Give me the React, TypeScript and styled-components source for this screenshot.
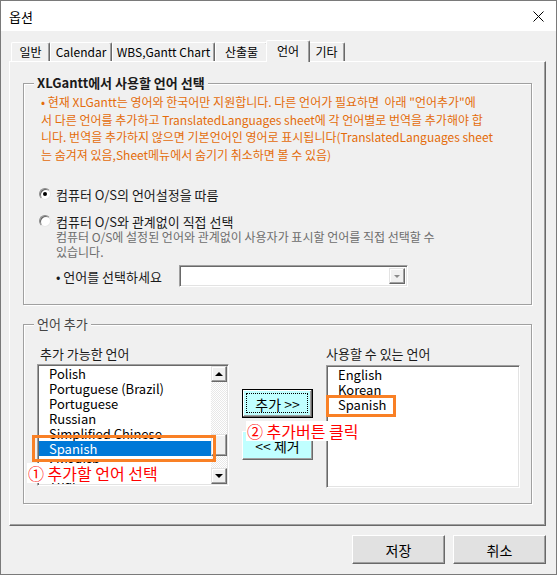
import React from 'react';
import styled, { createGlobalStyle, css } from 'styled-components';

const FONT = `"Noto Sans CJK KR", "Noto Sans", sans-serif`;

const Global = createGlobalStyle`
  html, body { margin: 0; padding: 0; background: #fff; }
  body { font-family: ${FONT}; }
  * { box-sizing: border-box; }
`;

const Window = styled.div`
  width: 557px;
  height: 575px;
  border: 1px solid #7a7a7a;
  background: #f0f0f0;
  display: flex;
  flex-direction: column;
  font-family: ${FONT};
  color: #000;
  overflow: hidden;
`;

const TitleBar = styled.div`
  height: 30px;
  flex: none;
  background: #fff;
  display: flex;
  align-items: center;
  justify-content: space-between;
  padding-left: 8px;
  font-size: 13px;
`;

const CloseBtn = styled.div`
  width: 36px;
  height: 30px;
  display: flex;
  align-items: center;
  justify-content: center;
`;

const TabStrip = styled.div`
  margin: 9px 0 0 10px;
  height: 21px;
  flex: none;
  display: flex;
  align-items: flex-end;
`;

const Tab = styled.div<{ $w: number; $active?: boolean }>`
  width: ${(p) => p.$w}px;
  height: 19px;
  font-size: 12px;
  line-height: 17px;
  text-align: center;
  white-space: nowrap;
  background: #f0f0f0;
  border-top: 1px solid #fff;
  border-left: 1px solid #fff;
  border-right: 1px solid #696969;
  box-shadow: inset -1px 0 0 #a0a0a0;
  border-top-left-radius: 2px;
  border-top-right-radius: 2px;
  ${(p) =>
    p.$active &&
    css`
      position: relative;
      z-index: 2;
      height: 22px;
      margin: 0 -2px -1px -2px;
      width: ${p.$w + 4}px;
      line-height: 19px;
    `}
`;

const Panel = styled.div`
  margin: 0 10px 0 8px;
  height: 465px;
  flex: none;
  border: 1px solid;
  border-color: #fff #696969 #696969 #fff;
  box-shadow: inset -1px -1px 0 #a0a0a0;
  padding: 21px 13px 0 13px;
  display: flex;
  flex-direction: column;
`;

const Group = styled.div<{ $h: number; $mt?: number }>`
  height: ${(p) => p.$h}px;
  margin-top: ${(p) => p.$mt ?? 0}px;
  border: 1px solid #a0a0a0;
  box-shadow: inset 1px 1px 0 #fff, 1px 1px 0 #fff;
  display: flex;
  flex-direction: column;
  flex: none;
`;

const Legend = styled.div<{ $bold?: boolean }>`
  align-self: flex-start;
  margin: -9px 0 0 10px;
  padding: 0 3px;
  background: #f0f0f0;
  height: 16px;
  line-height: 16px;
  font-size: 13px;
  font-weight: ${(p) => (p.$bold ? 700 : 400)};
  color: ${(p) => (p.$bold ? '#1a1a1a' : '#444')};
`;

const Notice = styled.div`
  margin: 2px 0 0 17px;
  color: #e46c0a;
  font-size: 12px;
  line-height: 17.5px;
  white-space: nowrap;
`;

const RadioRow = styled.div<{ $mt: number }>`
  margin-top: ${(p) => p.$mt}px;
  padding-left: 15px;
  height: 16px;
  display: flex;
  align-items: center;
  gap: 5px;
  font-size: 13px;
  color: #1a1a1a;
  white-space: nowrap;
`;

const RadioCircle = styled.span<{ $checked?: boolean }>`
  width: 12px;
  height: 12px;
  border-radius: 50%;
  background: #fff;
  border: 1px solid;
  border-color: #8a8a8a #e8e8e8 #e8e8e8 #8a8a8a;
  box-shadow: inset 1px 1px 0 #666;
  display: flex;
  align-items: center;
  justify-content: center;
  flex: none;
  &::after {
    content: '';
    width: 4px;
    height: 4px;
    border-radius: 50%;
    background: ${(p) => (p.$checked ? '#000' : 'transparent')};
  }
`;

const Description = styled.div`
  padding-left: 32px;
  color: #6d6d6d;
  font-size: 12px;
  line-height: 15px;
  white-space: nowrap;
`;

const SelectRow = styled.div`
  margin-top: 6px;
  padding-left: 32px;
  height: 22px;
  display: flex;
  align-items: center;
  font-size: 13px;
  color: #1a1a1a;
`;

const SelectLabel = styled.span`
  width: 123px;
  white-space: nowrap;
`;

const Combo = styled.div`
  width: 229px;
  height: 22px;
  background: #fff;
  border: 1px solid;
  border-color: #a0a0a0 #fff #fff #a0a0a0;
  box-shadow: inset 1px 1px 0 #696969, inset -1px -1px 0 #e3e3e3;
  padding: 2px;
  display: flex;
  justify-content: flex-end;
`;

const DropBtn = styled.div`
  width: 16px;
  height: 16px;
  background: #f0f0f0;
  border: 1px solid;
  border-color: #e3e3e3 #696969 #696969 #e3e3e3;
  box-shadow: inset -1px -1px 0 #a0a0a0, inset 1px 1px 0 #fff;
  display: flex;
  align-items: center;
  justify-content: center;
  &::after {
    content: '';
    border-left: 3px solid transparent;
    border-right: 3px solid transparent;
    border-top: 3px solid #8a8a8a;
  }
`;

const AddRow = styled.div`
  margin-top: 13px;
  padding-left: 13px;
  display: flex;
  align-items: flex-start;
`;

const Column = styled.div<{ $w: number }>`
  width: ${(p) => p.$w}px;
  display: flex;
  flex-direction: column;
  flex: none;
`;

const ColLabel = styled.div<{ $pl: number }>`
  height: 18px;
  line-height: 18px;
  font-size: 13px;
  color: #1a1a1a;
  padding-left: ${(p) => p.$pl}px;
  white-space: nowrap;
`;

const ListBox = styled.div<{ $h: number; $mt: number }>`
  position: relative;
  height: ${(p) => p.$h}px;
  margin-top: ${(p) => p.$mt}px;
  background: #fff;
  border: 1px solid;
  border-color: #a0a0a0 #fff #fff #a0a0a0;
  box-shadow: inset 1px 1px 0 #696969, inset -1px -1px 0 #e3e3e3;
  padding: 1px;
  display: flex;
`;

const Items = styled.div`
  flex: 1;
  overflow: hidden;
  display: flex;
  flex-direction: column;
`;

const Item = styled.div<{ $selected?: boolean }>`
  height: 15px;
  line-height: 15px;
  flex: none;
  padding-left: 10px;
  font-size: 13px;
  white-space: nowrap;
  color: ${(p) => (p.$selected ? '#fff' : '#000')};
  background: ${(p) => (p.$selected ? '#0078d7' : 'transparent')};
`;

const ScrollBar = styled.div`
  width: 16px;
  display: flex;
  flex-direction: column;
  flex: none;
`;

const scrollPart = css`
  background: #f0f0f0;
  border: 1px solid;
  border-color: #e3e3e3 #696969 #696969 #e3e3e3;
  box-shadow: inset -1px -1px 0 #a0a0a0, inset 1px 1px 0 #fff;
`;

const ScrollBtn = styled.div<{ $down?: boolean }>`
  ${scrollPart};
  height: 16px;
  flex: none;
  display: flex;
  align-items: center;
  justify-content: center;
  &::after {
    content: '';
    border-left: 4px solid transparent;
    border-right: 4px solid transparent;
    ${(p) =>
      p.$down
        ? css`border-top: 4px solid #000;`
        : css`border-bottom: 4px solid #000;`}
  }
`;

const Track = styled.div`
  flex: 1;
  background: repeating-conic-gradient(#e8e8e8 0 25%, #fff 0 50%) 0 0 / 2px 2px;
  display: flex;
  flex-direction: column;
`;

const Thumb = styled.div<{ $top: number; $h: number }>`
  ${scrollPart};
  margin-top: ${(p) => p.$top}px;
  height: ${(p) => p.$h}px;
`;

const Middle = styled.div`
  position: relative;
  width: 71px;
  margin: 0 13px;
  padding-top: 44px;
  display: flex;
  flex-direction: column;
  gap: 13px;
  flex: none;
`;

const CyanButton = styled.div<{ $default?: boolean }>`
  position: relative;
  width: 71px;
  height: 29px;
  background: #c0ffff;
  font-size: 14px;
  display: flex;
  align-items: center;
  justify-content: center;
  white-space: nowrap;
  ${(p) =>
    p.$default
      ? css`
          border: 1px solid #000;
          box-shadow: inset -1px -1px 0 #696969, inset 1px 1px 0 #fff, inset -2px -2px 0 #a0a0a0;
          &::after {
            content: '';
            position: absolute;
            inset: 3px 4px 4px 3px;
            border: 1px dotted #000;
          }
        `
      : css`
          border: 1px solid;
          border-color: #fff #696969 #696969 #fff;
          box-shadow: inset -1px -1px 0 #a0a0a0;
        `}
`;

const OrangeBox = styled.div<{ $l: number; $t: number; $w: number; $h: number }>`
  position: absolute;
  left: ${(p) => p.$l}px;
  top: ${(p) => p.$t}px;
  width: ${(p) => p.$w}px;
  height: ${(p) => p.$h}px;
  border: 3px solid #f98025;
  z-index: 3;
`;

const Annotation = styled.div<{ $l: number; $t: number }>`
  position: absolute;
  left: ${(p) => p.$l}px;
  top: ${(p) => p.$t}px;
  z-index: 4;
  background: #fff;
  color: #ff0000;
  font-size: 16px;
  line-height: 20px;
  height: 20px;
  padding: 0 1px;
  white-space: nowrap;
`;

const Footer = styled.div`
  margin-top: 9px;
  padding-right: 10px;
  display: flex;
  justify-content: flex-end;
  gap: 8px;
  flex: none;
`;

const FooterButton = styled.div`
  width: 93px;
  height: 29px;
  background: #e1e1e1;
  border: 1px solid;
  border-color: #fff #696969 #696969 #fff;
  box-shadow: inset -1px -1px 0 #a0a0a0;
  font-size: 14px;
  display: flex;
  align-items: center;
  justify-content: center;
`;

const tabs: { label: string; w: number; active?: boolean }[] = [
  { label: '일반', w: 39 },
  { label: 'Calendar', w: 62 },
  { label: 'WBS,Gantt Chart', w: 103 },
  { label: '산출물', w: 53 },
  { label: '언어', w: 40, active: true },
  { label: '기타', w: 37 },
];

const available = [
  'Polish',
  'Portuguese (Brazil)',
  'Portuguese',
  'Russian',
  'Simplified Chinese',
  'Spanish',
  'Swedish',
  'Thai',
];

const usable = ['English', 'Korean', 'Spanish'];

export default function App() {
  return (
    <>
      <Global />
      <Window>
        <TitleBar>
          <span>옵션</span>
          <CloseBtn>
            <svg width="11" height="11" viewBox="0 0 11 11">
              <path d="M0.5 0.5 L10.5 10.5 M10.5 0.5 L0.5 10.5" stroke="#000" strokeWidth="1" />
            </svg>
          </CloseBtn>
        </TitleBar>
        <TabStrip>
          {tabs.map((t) => (
            <Tab key={t.label} $w={t.w} $active={t.active}>
              {t.label}
            </Tab>
          ))}
        </TabStrip>
        <Panel>
          <Group $h={222}>
            <Legend $bold>XLGantt에서 사용할 언어 선택</Legend>
            <Notice>
              <div>• 현재 XLGantt는 영어와 한국어만 지원합니다. 다른 언어가 필요하면&nbsp; 아래 "언어추가"에</div>
              <div>서 다른 언어를 추가하고 TranslatedLanguages sheet에 각 언어별로 번역을 추가해야 합</div>
              <div>니다. 번역을 추가하지 않으면 기본언어인 영어로 표시됩니다(TranslatedLanguages sheet</div>
              <div>는 숨겨져 있음,Sheet메뉴에서 숨기기 취소하면 볼 수 있음)</div>
            </Notice>
            <RadioRow $mt={23}>
              <RadioCircle $checked />
              <span>컴퓨터 O/S의 언어설정을 따름</span>
            </RadioRow>
            <RadioRow $mt={11}>
              <RadioCircle />
              <span>컴퓨터 O/S와 관계없이 직접 선택</span>
            </RadioRow>
            <Description>
              <div>컴퓨터 O/S에 설정된 언어와 관계없이 사용자가 표시할 언어를 직접 선택할 수</div>
              <div>있습니다.</div>
            </Description>
            <SelectRow>
              <SelectLabel>• 언어를 선택하세요</SelectLabel>
              <Combo>
                <DropBtn />
              </Combo>
            </SelectRow>
          </Group>
          <Group $h={180} $mt={19}>
            <Legend>언어 추가</Legend>
            <AddRow>
              <Column $w={192}>
                <ColLabel $pl={3}>추가 가능한 언어</ColLabel>
                <ListBox $h={122} $mt={1}>
                  <Items>
                    {available.map((l) => (
                      <Item key={l} $selected={l === 'Spanish'}>
                        {l}
                      </Item>
                    ))}
                  </Items>
                  <ScrollBar>
                    <ScrollBtn />
                    <Track>
                      <Thumb $top={52} $h={22} />
                    </Track>
                    <ScrollBtn $down />
                  </ScrollBar>
                  <OrangeBox $l={-6} $t={70} $w={184} $h={27} />
                  <Annotation $l={-11} $t={98}>① 추가할 언어 선택</Annotation>
                </ListBox>
              </Column>
              <Middle>
                <CyanButton $default>추가 &gt;&gt;</CyanButton>
                <CyanButton>&lt;&lt; 제거</CyanButton>
                <Annotation $l={4} $t={76}>② 추가버튼 클릭</Annotation>
              </Middle>
              <Column $w={194}>
                <ColLabel $pl={0}>사용할 수 있는 언어</ColLabel>
                <ListBox $h={123} $mt={2}>
                  <Items>
                    {usable.map((l) => (
                      <Item key={l}>{l}</Item>
                    ))}
                  </Items>
                  <OrangeBox $l={-1} $t={29} $w={70} $h={22} />
                </ListBox>
              </Column>
            </AddRow>
          </Group>
        </Panel>
        <Footer>
          <FooterButton>저장</FooterButton>
          <FooterButton>취소</FooterButton>
        </Footer>
      </Window>
    </>
  );
}
